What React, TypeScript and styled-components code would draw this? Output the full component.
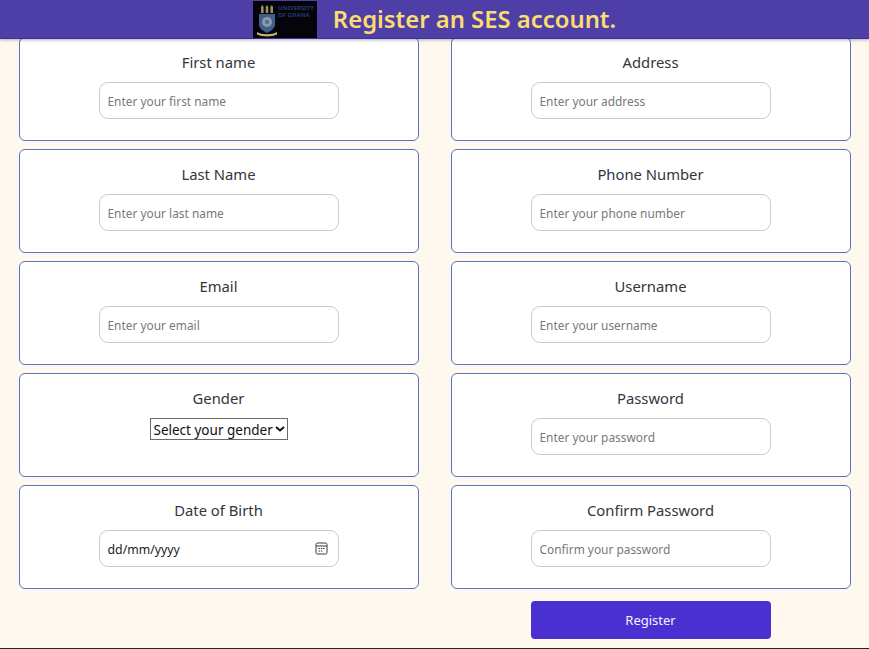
import React from 'react';
import styled, {createGlobalStyle} from 'styled-components';

const GlobalStyle = createGlobalStyle`
    html, body {
        margin: 0;
        padding: 0;
        height: 100%;
        background: #fff8ee;
    }
    * {
        box-sizing: border-box;
    }
    body {
        font-family: 'Noto Sans', 'Open Sans', sans-serif;
        overflow: hidden;
    }
`;

const Page = styled.div`
    height: 649px;
    background: #fff8ee;
    border-bottom: 1px solid #2a2422;
`;

const Header = styled.header`
    position: relative;
    z-index: 2;
    height: 39px;
    background: #4e3ea8;
    border-bottom: 1px solid #35349a;
    box-shadow: 0 1px 3px rgba(60, 50, 90, 0.4);
    display: flex;
    align-items: center;
    justify-content: center;
    gap: 16px;
`;

const Title = styled.h1`
    margin: 0;
    font-size: 23.85px;
    font-weight: 600;
    line-height: 38px;
    color: #fbdc6e;
`;

const Columns = styled.main`
    display: grid;
    grid-template-columns: 400px 400px;
    column-gap: 32px;
    justify-content: center;
    margin-top: -2px;
`;

const Column = styled.div`
    display: flex;
    flex-direction: column;
    gap: 8px;
`;

const Card = styled.section`
    height: 104px;
    background: #fff;
    border: 1px solid #5a72b8;
    border-radius: 6px;
    padding-top: 14px;
    display: flex;
    flex-direction: column;
    align-items: center;
`;

const Label = styled.label`
    font-size: 14.8px;
    line-height: 20px;
    color: #33363a;
    margin-bottom: 10px;
`;

const TextInput = styled.input`
    width: 240px;
    height: 37px;
    padding: 1px 8px 0;
    background: #fff;
    border: 1px solid #cbcbcb;
    border-radius: 9px;
    font-family: inherit;
    font-size: 11.9px;
    color: #222;
    outline: none;

    &::placeholder {
        color: #787878;
        opacity: 1;
    }
`;

const DateField = styled.div`
    width: 240px;
    height: 37px;
    padding: 2px 10px 0 8px;
    background: #fff;
    border: 1px solid #cbcbcb;
    border-radius: 9px;
    font-size: 12.3px;
    color: #1c1c1c;
    display: flex;
    align-items: center;
    justify-content: space-between;

    svg {
        margin-top: -3px;
    }
`;

const GenderSelect = styled.select`
    appearance: none;
    width: 138px;
    height: 22px;
    padding: 2px 0 0 3px;
    background: #fff url("data:image/svg+xml,%3Csvg xmlns='http://www.w3.org/2000/svg' width='10' height='6'%3E%3Cpath d='M1 1l4 3.500L9 1' fill='none' stroke='%23111' stroke-width='2'/%3E%3C/svg%3E") no-repeat right 2px center;
    border: 1px solid #6b6b6b;
    border-radius: 0;
    font-family: inherit;
    font-size: 13.500px;
    color: #111;
`;

const SubmitRow = styled.div`
    display: flex;
    justify-content: center;
    padding-top: 4px;
`;

const SubmitButton = styled.button`
    width: 240px;
    height: 38px;
    background: #4a30d0;
    border: none;
    border-radius: 4px;
    font-family: inherit;
    font-size: 13px;
    color: #f4f2ff;
`;

const Logo = () => (
    <svg width="64" height="37" viewBox="0 0 64 37" aria-hidden="true">
        <rect width="64" height="37" fill="#04040a" />
        <g fill="#9a9158">
            <path d="M8 12V6l1.300-2 1.300 2v6z" />
            <path d="M12.700 12V6L14 4l1.300 2v6z" />
            <path d="M17.400 12V6l1.300-2 1.300 2v6z" />
        </g>
        <path d="M6 13h16v11c0 3-4 6-8 8-4-2-8-5-8-8z" fill="#3f5f8c" />
        <circle cx="14" cy="21" r="5" fill="#8d9ba8" />
        <circle cx="14" cy="21" r="2.200" fill="#56708f" />
        <path d="M4 31c5 3 15 3 20 0v2.500c-5 2.500-15 2.500-20 0z" fill="#c2b277" />
        <text x="25" y="8.500" fontSize="6" fontWeight="700" fill="#26396a">UNIVERSITY</text>
        <text x="25" y="16" fontSize="6" fontWeight="700" fill="#26396a">OF GHANA</text>
    </svg>
);

const CalendarIcon = () => (
    <svg width="13" height="13" viewBox="0 0 13 13" fill="none" aria-hidden="true">
        <rect x="1" y="1" width="11" height="11" rx="1.500" stroke="#3a3a3a" />
        <path d="M1 4h11" stroke="#3a3a3a" />
        <path d="M3.500 6.500h1.500M5.800 6.500h1.500M8 6.500h1.500M3.500 9h1.500M5.800 9h1.500" stroke="#3a3a3a" />
    </svg>
);

const leftFields = [
    {label: 'First name', placeholder: 'Enter your first name'},
    {label: 'Last Name', placeholder: 'Enter your last name'},
    {label: 'Email', placeholder: 'Enter your email'},
];

const rightFields = [
    {label: 'Address', placeholder: 'Enter your address'},
    {label: 'Phone Number', placeholder: 'Enter your phone number'},
    {label: 'Username', placeholder: 'Enter your username'},
    {label: 'Password', placeholder: 'Enter your password'},
    {label: 'Confirm Password', placeholder: 'Confirm your password'},
];

const Field = ({label, placeholder}: {label: string; placeholder: string}) => (
    <Card>
        <Label>{label}</Label>
        <TextInput placeholder={placeholder} />
    </Card>
);

export default function App() {
    return (
        <Page>
            <GlobalStyle />
            <Header>
                <Logo />
                <Title>Register an SES account.</Title>
            </Header>
            <Columns>
                <Column>
                    {leftFields.map((field) => (
                        <Field key={field.label} {...field} />
                    ))}
                    <Card>
                        <Label>Gender</Label>
                        <GenderSelect defaultValue="">
                            <option value="">Select your gender</option>
                            <option value="female">Female</option>
                            <option value="male">Male</option>
                        </GenderSelect>
                    </Card>
                    <Card>
                        <Label>Date of Birth</Label>
                        <DateField>
                            <span>dd/mm/yyyy</span>
                            <CalendarIcon />
                        </DateField>
                    </Card>
                </Column>
                <Column>
                    {rightFields.map((field) => (
                        <Field key={field.label} {...field} />
                    ))}
                    <SubmitRow>
                        <SubmitButton type="button">Register</SubmitButton>
                    </SubmitRow>
                </Column>
            </Columns>
        </Page>
    );
}
